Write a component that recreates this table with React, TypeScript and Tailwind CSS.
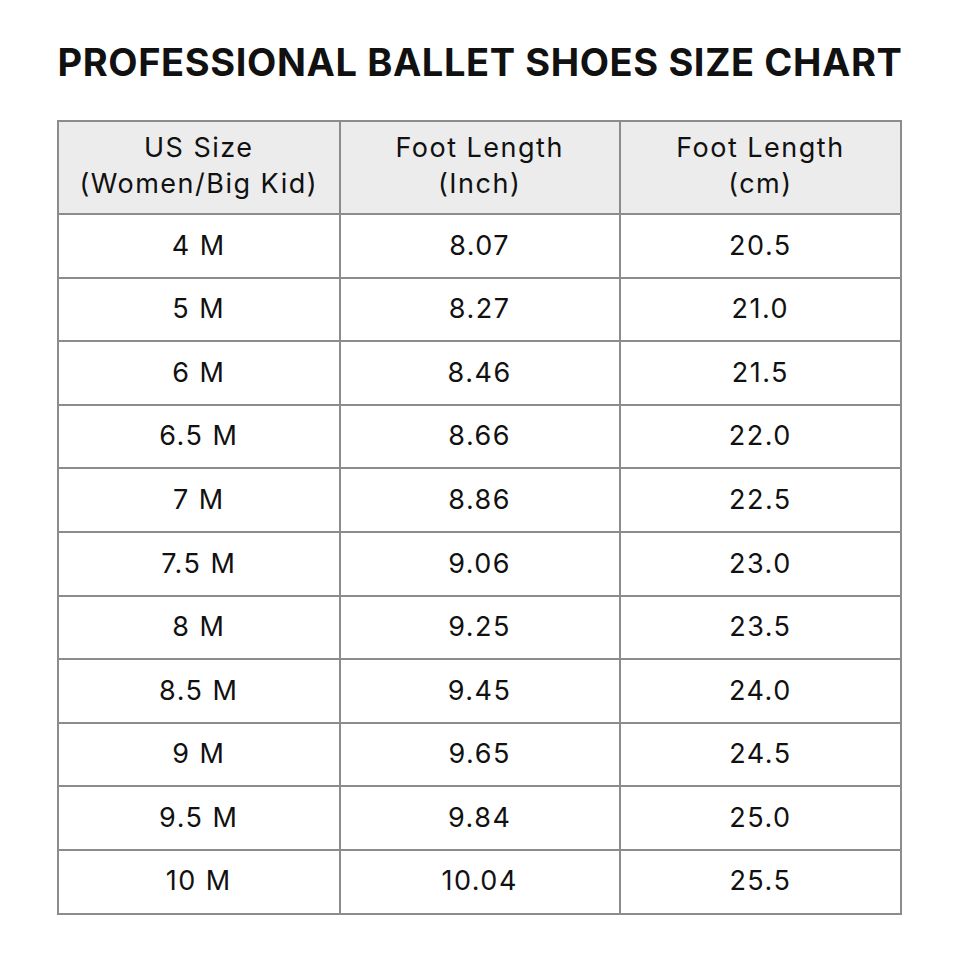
const rows: [string, string, string][] = [
  ["4 M", "8.07", "20.5"],
  ["5 M", "8.27", "21.0"],
  ["6 M", "8.46", "21.5"],
  ["6.5 M", "8.66", "22.0"],
  ["7 M", "8.86", "22.5"],
  ["7.5 M", "9.06", "23.0"],
  ["8 M", "9.25", "23.5"],
  ["8.5 M", "9.45", "24.0"],
  ["9 M", "9.65", "24.5"],
  ["9.5 M", "9.84", "25.0"],
  ["10 M", "10.04", "25.5"],
];

export default function App() {
  return (
    <main className="w-[960px] h-[960px] bg-white text-[#111] font-['Inter','Liberation_Sans',sans-serif]">
      <h1 className="pt-[40px] h-[120px] text-center text-[38px] leading-[44px] font-bold tracking-[0.6px]">
        PROFESSIONAL BALLET SHOES SIZE CHART
      </h1>
      <table className="ml-[57px] w-[845px] border-collapse border-2 border-[#8c8c8c] text-[27px] tracking-[1.5px] font-normal">
        <colgroup>
          <col className="w-[282px]" />
          <col className="w-[281px]" />
          <col className="w-[282px]" />
        </colgroup>
        <thead>
          <tr className="h-[93px] bg-[#ececec]">
            <th className="border-2 border-[#8c8c8c] font-normal leading-[36px] pb-[3px]">US Size<br />(Women/Big Kid)</th>
            <th className="border-2 border-[#8c8c8c] font-normal leading-[36px] pb-[3px]">Foot Length<br />(Inch)</th>
            <th className="border-2 border-[#8c8c8c] font-normal leading-[36px] pb-[3px]">Foot Length<br />(cm)</th>
          </tr>
        </thead>
        <tbody>
          {rows.map((r) => (
            <tr key={r[0]} className="h-[63.6px]">
              {r.map((c, i) => (
                <td key={i} className="border-2 border-[#8c8c8c] text-center">{c}</td>
              ))}
            </tr>
          ))}
        </tbody>
      </table>
    </main>
  );
}
